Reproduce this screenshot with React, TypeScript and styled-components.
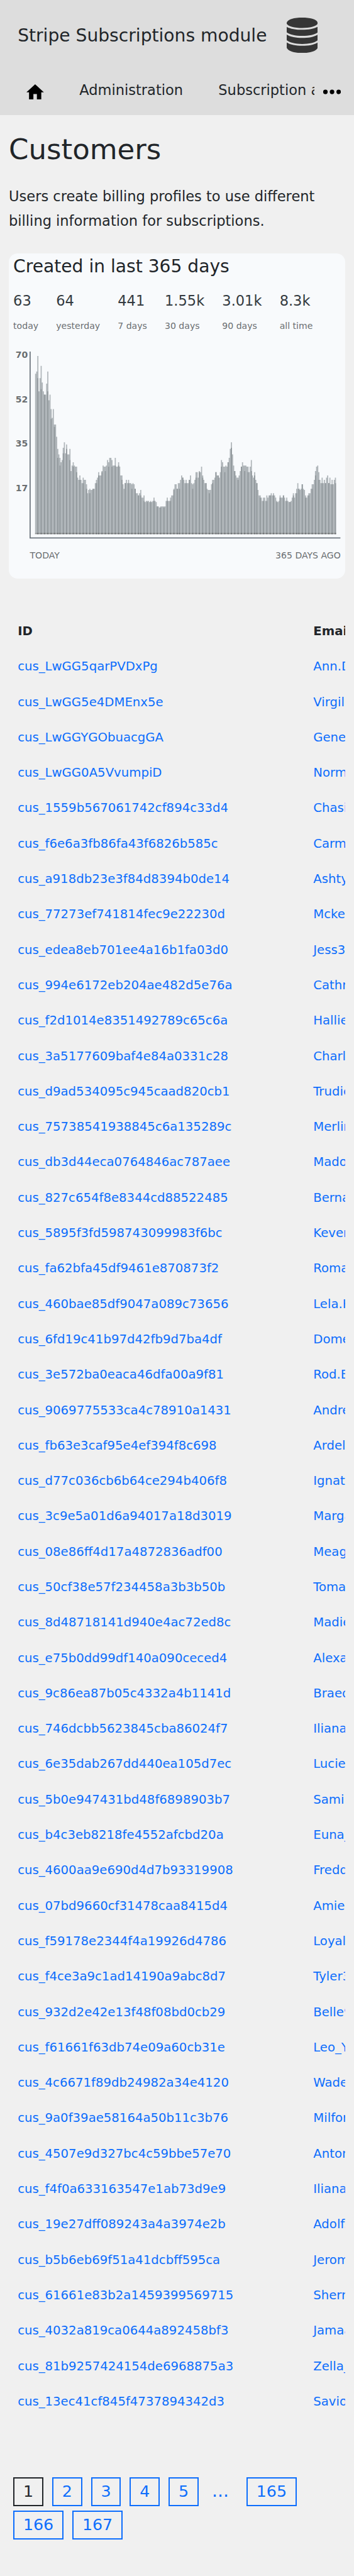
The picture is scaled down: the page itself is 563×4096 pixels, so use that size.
import React from "react";
import styled, { createGlobalStyle } from "styled-components";

/* Every length is written on a 640px wide design grid and scaled to the page. */
const SCALE = 563 / 640;
const u = (n: number) => `${+(n * SCALE).toFixed(3)}px`;

const LINK = "#0d6efd";
const INK = "#212529";
const MUTED = "#6a6e71";

const GlobalStyle = createGlobalStyle`
  * { box-sizing: border-box; }
  html, body { margin: 0; padding: 0; background: #f0f0f0; }
  body {
    font-family: "DejaVu Sans", sans-serif;
    font-size: ${u(25.6)};
    color: ${INK};
    overflow-x: hidden;
  }
`;

const Page = styled.div`
  width: ${u(640)};
  height: ${u(4656)};
  max-height: 4096px;
  overflow: hidden;
`;

const Header = styled.header`
  height: ${u(208)};
  background: #ddd;
`;

const Brand = styled.div`
  display: flex;
  align-items: center;
  height: ${u(128)};
  padding-left: ${u(32)};
  gap: ${u(35.4)};
  svg {
    display: block;
    width: ${u(56)};
    height: ${u(64)};
    fill: #363636;
  }
`;

const BrandName = styled.span`
  font-size: ${u(32)};
  line-height: ${u(40)};
  white-space: nowrap;
`;

const Nav = styled.nav`
  display: flex;
  height: ${u(80)};
  padding-left: ${u(16)};
`;

const NavItems = styled.div`
  display: flex;
  width: ${u(552)};
  overflow: hidden;
`;

const NavLink = styled.a`
  flex: none;
  padding: ${u(13.4)} ${u(32)} 0;
  line-height: ${u(44)};
  white-space: nowrap;
  svg {
    display: block;
    width: ${u(31.6)};
    height: ${u(27.2)};
    margin-top: ${u(11.4)};
  }
`;

const MoreButton = styled.button`
  align-self: flex-start;
  border: 0;
  padding: ${u(30)} 0 0 ${u(16)};
  background: none;
  svg {
    display: block;
    width: ${u(32)};
    height: ${u(16)};
  }
`;

const Content = styled.main`
  padding: ${u(32)} ${u(16)} 0;
`;

const Heading = styled.h1`
  margin: 0;
  font-size: ${u(51.2)};
  line-height: ${u(61)};
  font-weight: 400;
`;

const Lead = styled.p`
  margin: ${u(32.4)} 0 ${u(37.2)};
  line-height: ${u(43.7)};
`;

const Card = styled.section`
  height: ${u(588)};
  padding: ${u(5.2)} ${u(8)} 0;
  border-radius: ${u(16)};
  background: #f8fafc;
`;

const CardTitle = styled.h2`
  margin: 0;
  font-size: ${u(32)};
  line-height: ${u(38)};
  font-weight: 400;
`;

const Stats = styled.div`
  display: flex;
  gap: ${u(32)};
  margin-top: ${u(22.8)};
  height: ${u(112)};
`;

const Stat = styled.div`
  color: #343a40;
  line-height: ${u(40)};
  white-space: nowrap;
`;

const StatLabel = styled.div`
  margin-top: ${u(14)};
  font-size: ${u(16)};
  line-height: ${u(24)};
  color: ${MUTED};
`;

const Chart = styled.div`
  display: grid;
  grid-template-columns: ${u(26.4)} ${u(562)};
  column-gap: ${u(3.6)};
`;

const YAxis = styled.div`
  text-align: right;
`;

const Tick = styled.div`
  height: ${u(80)};
  font-size: ${u(16)};
  line-height: ${u(13)};
  font-weight: 700;
  color: ${MUTED};
`;

const Plot = styled.svg`
  display: block;
  width: ${u(562)};
  height: ${u(338)};
`;

const XAxis = styled.div`
  grid-column: 2;
  display: flex;
  justify-content: space-between;
  margin-top: ${u(19)};
  font-size: ${u(16)};
  line-height: ${u(24)};
  color: ${MUTED};
`;

const Table = styled.div`
  margin-top: ${u(63.5)};
  overflow: hidden;
`;

const Row = styled.div<{ $head?: boolean }>`
  display: grid;
  grid-template-columns: ${u(534.4)} ${u(400)};
  height: ${u(64)};
  padding-left: ${u(16)};
  font-size: ${u(22.4)};
  line-height: ${u(64)};
  white-space: nowrap;
  font-weight: ${(p) => (p.$head ? 700 : 400)};
  color: ${(p) => (p.$head ? INK : LINK)};
`;

const Pager = styled.div`
  display: flex;
  flex-wrap: wrap;
  gap: ${u(8)} ${u(16)};
  width: ${u(560)};
  margin: ${u(104.5)} 0 0 ${u(8)};
  font-size: ${u(28.8)};
`;

const PageLink = styled.a<{ $current?: boolean }>`
  height: ${u(52)};
  padding: 0 ${u(15.7)};
  border: 2px solid ${(p) => (p.$current ? INK : LINK)};
  line-height: ${u(46.4)};
  color: ${(p) => (p.$current ? INK : LINK)};
`;

const PageGap = styled.span`
  width: ${u(54.4)};
  padding-left: ${u(8)};
  font-size: ${u(32)};
  line-height: ${u(49.4)};
  color: ${LINK};
`;

const stats = [
  ["63", "today"],
  ["64", "yesterday"],
  ["441", "7 days"],
  ["1.55k", "30 days"],
  ["3.01k", "90 days"],
  ["8.3k", "all time"],
];

/* One entry per chart column: the taller bar, then the overlapping bar if two days share it. */
const columns = `
145 147 161/141 129 141 152/131 137 129 126/126 126 136 147/129 121 126 113/104 105 113 99/97 99 88
77/69 72 69/62 65 67 78/73 83 73 81/77 72 72 77/67 57 62 65/61 62 61 61/56 51 49
53/49 49 46 51/46 49 49 45/41 37 40 41/37 40 40 41/41 41 46 49/46 51 56/53 53 53
57/56 62 61 61/57 62 67 65/61 69 69 67/61 62 62 69/62 61 61 65/62 61 53 53/49 45
41 46/46 49 46 49/46 46 46 45/41 46 45 41/41 37 37 35/35 37 40/35 33 33 35/30 29
30 30/29 30 29 30/29 29 30 33/30 30 29 25/25 25 24 25/24 25 25 25/24 25 30 33/30
30 30 33/30 35 35 41/40 45 45 41/41 46 46/41 49 53 51/51 49 46 49/46 46 46 49/49
53 46 45/41 46 49 56/51 56 51 57/56 56 61 53/51 49 46 46/46 41 40 40/37 40 45
49/46 49 51 56/56 53 53/53 51 56 67/61 65 61 61/56 62 61 65/65 69 77 83/78 72 62
57/57 53 51 51/49 53 57 61/61 65 62 62/57 62 61 61/56 56 61 67/57 53 51 56/53
49 46/46 40 35 35/33 33 30 33/30 33 30 35/30 33 35 35/35 37 35 37/35 35 33
30/29 29 30 35/33 33 33 35/35 33 30 33/30 30 29 29/29 30 33 37/35 33 37 41/37 46
41/41 40 41 45/45 41 40 35/33 33 35 37/35 37 41 45/41 45 49 57/53 61 62 56/49 49
46 51/46 46 49 46/46 51 53 46/46 51 45 49/45 45 49 51/46`
  .trim()
  .split(/\s+/)
  .map((c) => c.split("/").map(Number));

const BASE = 330;
const outline =
  `M10 ${BASE}` +
  columns.map(([h], i) => `V${BASE - 2 * h}H${12 + 2 * i}`).join("") +
  `V${BASE}Z`;
const overlaps = columns
  .map(([, h], i) => (h ? `M${10 + 2 * i} ${BASE}V${BASE - 2 * h}h2V${BASE}Z` : ""))
  .join("");
const feet = columns
  .map(([, h], i) => (h ? `M${10 + 2 * i} ${BASE}v-2h2v2Z` : ""))
  .join("");

const customers = `
LwGG5qarPVDxPg Ann.D|LwGG5e4DMEnx5e Virgil|LwGGYGObuacgGA Gene|LwGG0A5VvumpiD Norm
1559b567061742cf894c33d4 Chasi|f6e6a3fb86fa43f6826b585c Carm|a918db23e3f84d8394b0de14 Ashty
77273ef741814fec9e22230d Mcke|edea8eb701ee4a16b1fa03d0 Jess3|994e6172eb204ae482d5e76a Cathr
f2d1014e8351492789c65c6a Hallie|3a5177609baf4e84a0331c28 Charl|d9ad534095c945caad820cb1 Trudie
75738541938845c6a135289c Merlin|db3d44eca0764846ac787aee Mado|827c654f8e8344cd88522485 Berna
5895f3fd598743099983f6bc Keven|fa62bfa45df9461e870873f2 Roma|460bae85df9047a089c73656 Lela.K
6fd19c41b97d42fb9d7ba4df Dome|3e572ba0eaca46dfa00a9f81 Rod.B|9069775533ca4c78910a1431 Andre
fb63e3caf95e4ef394f8c698 Ardel|d77c036cb6b64ce294b406f8 Ignat|3c9e5a01d6a94017a18d3019 Marga
08e86ff4d17a4872836adf00 Meag|50cf38e57f234458a3b3b50b Toma|8d48718141d940e4ac72ed8c Madie
e75b0dd99df140a090ceced4 Alexa|9c86ea87b05c4332a4b1141d Braed|746dcbb5623845cba86024f7 Iliana
6e35dab267dd440ea105d7ec Lucie|5b0e947431bd48f6898903b7 Sami|b4c3eb8218fe4552afcbd20a Euna_
4600aa9e690d4d7b93319908 Fredd|07bd9660cf31478caa8415d4 Amie|f59178e2344f4a19926d4786 Loyal
f4ce3a9c1ad14190a9abc8d7 Tyler3|932d2e42e13f48f08bd0cb29 Belle9|f61661f63db74e09a60cb31e Leo_Y
4c6671f89db24982a34e4120 Wade|9a0f39ae58164a50b11c3b76 Milfor|4507e9d327bc4c59bbe57e70 Anton
f4f0a633163547e1ab73d9e9 Iliana|19e27dff089243a4a3974e2b Adolf.|b5b6eb69f51a41dcbff595ca Jerom
61661e83b2a1459399569715 Sherm|4032a819ca0644a892458bf3 Jamaa|81b9257424154de6968875a3 Zella_
13ec41cf845f4737894342d3 Savio`
  .trim()
  .split(/[\n|]/)
  .map((line) => line.split(" "));

const DatabaseIcon = () => (
  <svg viewBox="0 0 168 192">
    <path d="M0 33V27C6 9 40 0 84 0s78 9 84 27v6c-8 15-42 23-84 23S8 48 0 33z" />
    <path d="M0 50c20 11 50 16 84 16s64-5 84-16v30c-16 12-46 19-84 19S16 92 0 80z" />
    <path d="M0 92c20 13 50 18 84 18s64-5 84-18v31c-16 13-46 20-84 20S16 136 0 123z" />
    <path d="M0 135c20 13 50 18 84 18s64-5 84-18v29c-8 19-42 28-84 28S8 183 0 164z" />
  </svg>
);

const HomeIcon = () => (
  <svg viewBox="2 3 20 17" preserveAspectRatio="none">
    <path d="M10 20v-6h4v6h5v-8h3L12 3 2 12h3v8z" />
  </svg>
);

const MoreIcon = () => (
  <svg viewBox="4 8 16 8">
    <circle cx="6" cy="12" r="2.05" />
    <circle cx="12" cy="12" r="2.05" />
    <circle cx="18" cy="12" r="2.05" />
  </svg>
);

export default function App() {
  return (
    <Page>
      <GlobalStyle />
      <Header>
        <Brand>
          <BrandName>Stripe Subscriptions module</BrandName>
          <DatabaseIcon />
        </Brand>
        <Nav>
          <NavItems>
            <NavLink>
              <HomeIcon />
            </NavLink>
            <NavLink>Administration</NavLink>
            <NavLink>Subscription a</NavLink>
          </NavItems>
          <MoreButton aria-label="More">
            <MoreIcon />
          </MoreButton>
        </Nav>
      </Header>
      <Content>
        <Heading>Customers</Heading>
        <Lead>
          Users create billing profiles to use different
          <br />
          billing information for subscriptions.
        </Lead>
        <Card>
          <CardTitle>Created in last 365 days</CardTitle>
          <Stats>
            {stats.map(([value, label]) => (
              <Stat key={label}>
                {value}
                <StatLabel>{label}</StatLabel>
              </Stat>
            ))}
          </Stats>
          <Chart>
            <YAxis>
              {[70, 52, 35, 17].map((t) => (
                <Tick key={t}>{t}</Tick>
              ))}
            </YAxis>
            <Plot viewBox="0 0 562 338">
              <path d={outline} fill="#b0b6ba" />
              <path d={overlaps} fill="#90979b" />
              <path d="M10 328h544v2H10z" fill="#919394" />
              <path d={feet} fill="#5f6366" />
              <path d="M0 0h2v336h560v2H0z" fill="#6c757d" />
            </Plot>
            <XAxis>
              <span>TODAY</span>
              <span>365 DAYS AGO</span>
            </XAxis>
          </Chart>
        </Card>
        <Table>
          <Row $head>
            <span>ID</span>
            <span>Email</span>
          </Row>
          {customers.map(([id, email]) => (
            <Row key={id}>
              <span>cus_{id}</span>
              <span>{email}</span>
            </Row>
          ))}
        </Table>
        <Pager>
          {["1", "2", "3", "4", "5", "...", "165", "166", "167"].map((p) =>
            p === "..." ? (
              <PageGap key={p}>{p}</PageGap>
            ) : (
              <PageLink key={p} $current={p === "1"}>
                {p}
              </PageLink>
            )
          )}
        </Pager>
      </Content>
    </Page>
  );
}
